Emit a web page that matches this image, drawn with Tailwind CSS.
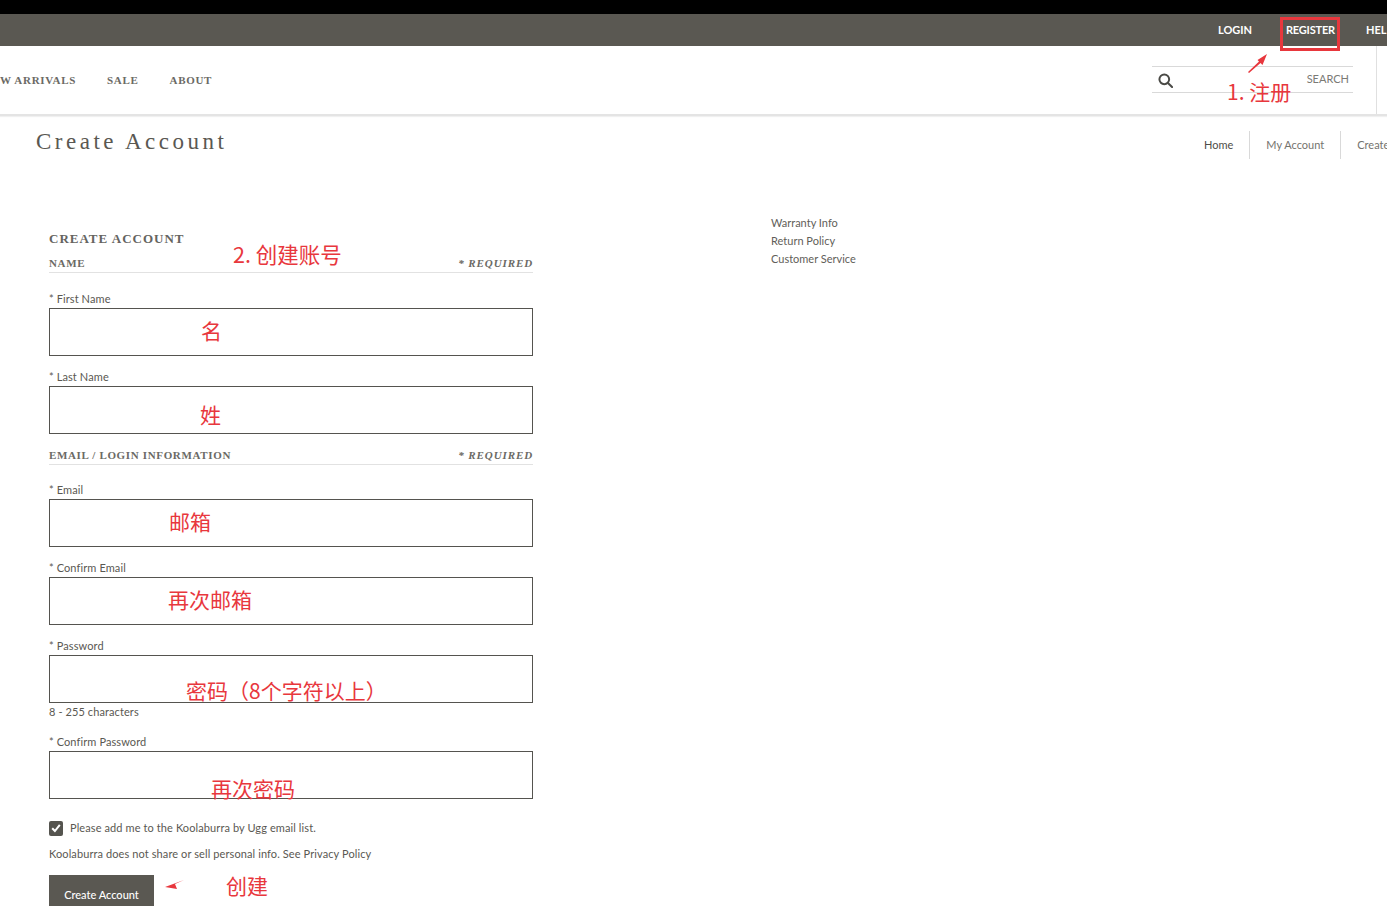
<!DOCTYPE html>
<html lang="en">
<head>
<meta charset="utf-8">
<title>Create Account</title>
<script src="https://cdn.jsdelivr.net/npm/@tailwindcss/browser@4"></script>
</head>
<body class="relative h-[906px] w-[1387px] overflow-hidden bg-white font-['Lato',sans-serif] text-[#5a5852]">

  <!-- top bars -->
  <div class="h-[14px] bg-black"></div>
  <div class="flex h-[32px] items-center overflow-hidden bg-[#5a5852] pl-[1218px] text-[11px] font-bold whitespace-nowrap text-white">
    <a class="w-[68px] shrink-0">LOGIN</a>
    <a class="w-[80px] shrink-0 tracking-[-0.2px]">REGISTER</a>
    <a class="w-[21px] shrink-0 overflow-hidden">HEL</a>
  </div>

  <!-- main nav -->
  <div class="flex h-[70px] items-center overflow-hidden border-b-[2px] border-[#e4e4e4] shadow-[0_1px_1px_#f0f0f0]">
    <nav class="flex w-[1152px] shrink-0 gap-[31px] font-['Liberation_Serif',serif] text-[11px] font-bold tracking-[0.7px] whitespace-nowrap text-[#6b6a65]">
      <a>W ARRIVALS</a>
      <a>SALE</a>
      <a>ABOUT</a>
    </nav>
    <div class="-mt-[1px] flex h-[27px] w-[201px] shrink-0 items-center justify-between border-y border-[#d9d9d9] pr-[4px] pl-[6px]">
      <svg class="mt-[1px] h-[15px] w-[15px]" viewBox="0 0 16 16" fill="none" stroke="#4a4a46" stroke-width="2.1"><circle cx="6.7" cy="6.7" r="5.2"/><path d="M10.6 10.6 15 15" stroke-linecap="round"/></svg>
      <span class="text-[11px] text-[#7b7a75]">SEARCH</span>
    </div>
    <div class="ml-[23px] h-full border-l border-[#e0e0e0]"></div>
  </div>

  <!-- page title + breadcrumb -->
  <div class="flex h-[61px] items-start overflow-hidden">
    <h1 class="ml-[36px] w-[1168px] shrink-0 pt-[11px] font-['Liberation_Serif',serif] text-[23px] leading-[30px] tracking-[3.5px] text-[#5a5852]">Create Account</h1>
    <div class="mt-[15px] flex h-[28px] shrink-0 items-center text-[11px] whitespace-nowrap">
      <a class="pr-[16px] text-[#4e4d48]">Home</a>
      <a class="border-l border-[#d9d9d9] px-[16px] leading-[28px] text-[#74736e]">My Account</a>
      <a class="border-l border-[#d9d9d9] pl-[16px] leading-[28px] text-[#74736e]">Create</a>
    </div>
  </div>

  <div class="flex">
    <!-- form -->
    <form class="ml-[49px] w-[484px] shrink-0 pt-[54px] text-[11px] tracking-[0.1px]">
      <h2 class="font-['Liberation_Serif',serif] text-[13px] leading-[16px] font-bold tracking-[1px] text-[#65645f]">CREATE ACCOUNT</h2>

      <div class="mt-[7px] flex h-[19px] items-center justify-between border-b border-[#e2e2e2] font-['Liberation_Serif',serif] text-[11px] font-bold tracking-[0.65px] text-[#6b6a65]">
        <span>NAME</span><span class="tracking-[0.9px] italic">* REQUIRED</span>
      </div>

      <label class="mt-[18px] block h-[17px] leading-[16px]">* First Name</label>
      <div class="h-[48px] border border-[#55544f]"></div>
      <label class="mt-[13px] block h-[17px] leading-[16px]">* Last Name</label>
      <div class="h-[48px] border border-[#55544f]"></div>

      <div class="mt-[12px] flex h-[19px] items-center justify-between border-b border-[#e2e2e2] font-['Liberation_Serif',serif] text-[11px] font-bold tracking-[0.65px] text-[#6b6a65]">
        <span>EMAIL / LOGIN INFORMATION</span><span class="tracking-[0.9px] italic">* REQUIRED</span>
      </div>

      <label class="mt-[17px] block h-[17px] leading-[16px]">* Email</label>
      <div class="h-[48px] border border-[#55544f]"></div>
      <label class="mt-[13px] block h-[17px] leading-[16px]">* Confirm Email</label>
      <div class="h-[48px] border border-[#55544f]"></div>
      <label class="mt-[13px] block h-[17px] leading-[16px]">* Password</label>
      <div class="h-[48px] border border-[#55544f]"></div>
      <p class="mt-[1px] h-[16px] leading-[16px]">8 - 255 characters</p>
      <label class="mt-[14px] block h-[17px] leading-[16px]">* Confirm Password</label>
      <div class="h-[48px] border border-[#55544f]"></div>

      <div class="mt-[21px] flex h-[16px] items-center gap-[7px]">
        <span class="flex h-[15px] w-[14px] items-center justify-center rounded-[2px] bg-[#55544f]">
          <svg class="h-[10px] w-[10px]" viewBox="0 0 10 10" fill="none" stroke="white" stroke-width="2"><path d="M1.2 5.2 3.9 8 8.8 1.8"/></svg>
        </span>
        <span>Please add me to the Koolaburra by Ugg email list.</span>
      </div>
      <p class="mt-[10px] h-[16px] leading-[16px]">Koolaburra does not share or sell personal info. See Privacy Policy</p>
      <button type="button" class="mt-[13px] block h-[40px] w-[105px] bg-[#5a5852] pt-[1px] text-[11px] font-medium tracking-normal text-white">Create Account</button>
    </form>

    <!-- side links -->
    <ul class="ml-[238px] pt-[37px] text-[11px] leading-[18px] text-[#5f5e59]">
      <li>Warranty Info</li>
      <li>Return Policy</li>
      <li>Customer Service</li>
    </ul>
  </div>

  <!-- red annotations drawn over the screenshot -->
  <div class="absolute top-[17px] left-[1280px] h-[34px] w-[60px] border-[3px] border-[#e8373d]"></div>
  <svg class="absolute top-[52px] left-[1245px] h-[22px] w-[26px]" viewBox="0 0 26 22"><path d="M3 20 14 9.5 12.5 8 22 2 17.5 13 15.5 11 4 21Z" fill="#e8373d"/></svg>
  <svg class="absolute top-[878px] left-[163px] h-[12px] w-[24px]" viewBox="0 0 24 12"><path d="M2 9 21 2 12 6 14 11Z" fill="#e8373d"/></svg>

  <span class="absolute top-[78px] left-[1227px] font-['Noto_Sans_CJK_SC',sans-serif] text-[21px] leading-[26px] text-[#e8373d]">1. 注册</span>
  <span class="absolute top-[241px] left-[233px] font-['Noto_Sans_CJK_SC',sans-serif] text-[21.5px] leading-[26px] text-[#e8373d]">2. 创建账号</span>
  <span class="absolute top-[317px] left-[201px] font-['Noto_Sans_CJK_SC',sans-serif] text-[21px] leading-[26px] text-[#e8373d]">名</span>
  <span class="absolute top-[401px] left-[200px] font-['Noto_Sans_CJK_SC',sans-serif] text-[21px] leading-[26px] text-[#e8373d]">姓</span>
  <span class="absolute top-[508px] left-[169px] font-['Noto_Sans_CJK_SC',sans-serif] text-[21px] leading-[26px] text-[#e8373d]">邮箱</span>
  <span class="absolute top-[586px] left-[168px] font-['Noto_Sans_CJK_SC',sans-serif] text-[21px] leading-[26px] text-[#e8373d]">再次邮箱</span>
  <span class="absolute top-[677px] left-[186px] font-['Noto_Sans_CJK_SC',sans-serif] text-[21px] leading-[26px] text-[#e8373d]">密码（8个字符以上）</span>
  <span class="absolute top-[775px] left-[211px] font-['Noto_Sans_CJK_SC',sans-serif] text-[21px] leading-[26px] text-[#e8373d]">再次密码</span>
  <span class="absolute top-[872px] left-[226px] font-['Noto_Sans_CJK_SC',sans-serif] text-[21px] leading-[26px] text-[#e8373d]">创建</span>
</body>
</html>
